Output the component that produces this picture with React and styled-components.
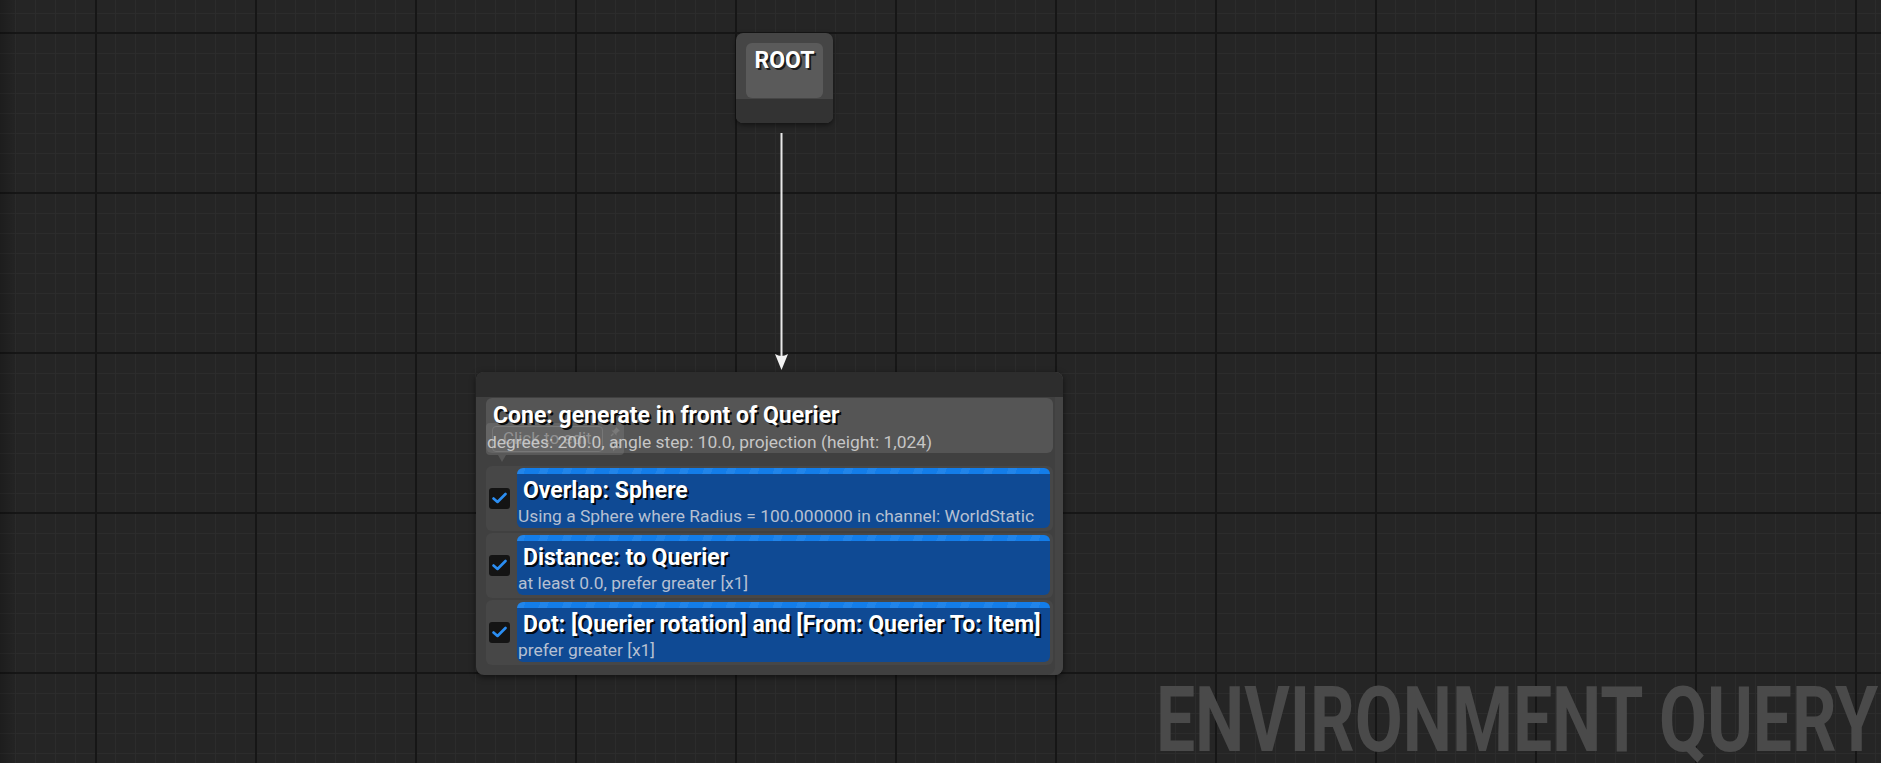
import React from "react";
import styled, { createGlobalStyle } from "styled-components";

const GlobalStyle = createGlobalStyle`
    html, body {
        margin: 0;
        padding: 0;
        background: #252525;
    }
    body {
        font-family: Roboto, "Noto Sans", sans-serif;
    }
`

const Canvas = styled.div`
    position: relative;
    width: 1881px;
    height: 763px;
    overflow: hidden;
    background-color: #252525;
    background-image:
        linear-gradient(90deg, rgba(0,0,0,0.22), rgba(0,0,0,0) 18px),
        linear-gradient(90deg, #161616 0 2px, transparent 2px),
        linear-gradient(180deg, #161616 0 2px, transparent 2px),
        linear-gradient(90deg, #2c2c2c 0 1px, transparent 1px),
        linear-gradient(180deg, #2c2c2c 0 1px, transparent 1px);
    background-size: 100% 100%, 160px 160px, 160px 160px, 20px 20px, 20px 20px;
    background-position: 0 0, 95px 0, 0 32px, 15px 0, 0 13px;
`

const NodeSpot = styled.div`
    position: absolute;
    left: ${props => props.$x}px;
    top: ${props => props.$y}px;
`

const RootNode = styled.div`
    width: 97px;
    height: 90px;
    border-radius: 7px;
    background: #454545;
    box-shadow: 0 2px 5px rgba(0,0,0,0.5);
    display: flex;
    flex-direction: column;
    overflow: hidden;
`

const RootLabel = styled.div`
    margin: 10px 10px 0 10px;
    height: 55px;
    border-radius: 6px;
    background: #5a5a5a;
    display: flex;
    justify-content: center;
    padding-top: 4px;
    box-sizing: border-box;
    color: #fff;
    font-size: 23px;
    font-weight: 700;
    line-height: 27px;
    text-shadow: 2px 2px 0 #1a1a1a;
`

const RootFoot = styled.div`
    margin-top: auto;
    height: 24px;
    background: #333;
`

const Wire = styled.svg`
    position: absolute;
    left: 770px;
    top: 130px;
    overflow: visible;
`

const QueryNode = styled.div`
    width: 587px;
    border-radius: 8px;
    background: #404040;
    box-shadow: 0 2px 6px rgba(0,0,0,0.55), inset -8px 0 0 #454545;
    overflow: hidden;
`

const NodeHeader = styled.div`
    height: 25px;
    background: #2d2d2d;
`

const NodeBody = styled.div`
    padding: 1px 10px 10px 10px;
`

const TitleBox = styled.div`
    position: relative;
    height: 55px;
    border-radius: 6px;
    background: #555;
    box-sizing: border-box;
    padding-top: 5px;
`

const Title = styled.div`
    position: relative;
    z-index: 1;
    padding-left: ${props => props.$indent}px;
    color: #fff;
    font-size: 23px;
    font-weight: 700;
    line-height: 26px;
    white-space: nowrap;
    text-shadow: 2px 2px 0 rgba(0,0,0,0.9);
`

const Subtitle = styled.div`
    position: relative;
    z-index: 1;
    margin-top: ${props => props.$gap}px;
    padding-left: 1px;
    color: ${props => props.$tone};
    font-size: 17.4px;
    line-height: 20px;
    white-space: nowrap;
`

const EditTip = styled.div`
    position: absolute;
    left: 0;
    top: 25px;
    width: 138px;
    height: 32px;
    border-radius: 4px;
    background: rgba(125,125,125,0.4);
    display: flex;
    align-items: center;
    padding-left: 6px;
    box-sizing: border-box;
    &::after {
        content: "";
        position: absolute;
        left: 12px;
        bottom: -7px;
        border-left: 4px solid transparent;
        border-right: 4px solid transparent;
        border-top: 7px solid rgba(125,125,125,0.4);
    }
`

const EditField = styled.div`
    width: 111px;
    height: 26px;
    border: 1px solid #777;
    border-radius: 4px;
    box-sizing: border-box;
    color: rgba(255,255,255,0.3);
    font-size: 17px;
    line-height: 22px;
    padding-left: 10px;
    white-space: nowrap;
    overflow: hidden;
`

const TipIcons = styled.div`
    display: flex;
    flex-direction: column;
    gap: 4px;
    margin-left: 7px;
`

const Rows = styled.div`
    margin-top: 13px;
    display: flex;
    flex-direction: column;
    gap: 2px;
`

const Row = styled.div`
    height: 65px;
    border-radius: 6px;
    background: #474747;
    display: flex;
    align-items: center;
    padding: 2px 3px 3px 0;
    box-sizing: border-box;
`

const CheckSlot = styled.div`
    width: 31px;
    padding-left: 3px;
    box-sizing: border-box;
    display: flex;
`

const CheckBox = styled.div`
    width: 21px;
    height: 21px;
    border-radius: 3px;
    background: #141414;
    display: flex;
    align-items: center;
    justify-content: center;
`

const TestBlock = styled.div`
    flex: 1;
    height: 60px;
    border-radius: 6px;
    background:
        repeating-linear-gradient(110deg, rgba(255,255,255,0.06) 0 8px, rgba(255,255,255,0) 8px 22px) 0 0 / 100% 6px no-repeat,
        linear-gradient(180deg, #137de9 0 6px, #0f4a94 6px);
    box-sizing: border-box;
    padding-top: 10px;
    display: flex;
    flex-direction: column;
`

const Watermark = styled.div`
    position: absolute;
    right: 3px;
    bottom: 2px;
    color: #4a4a4a;
    font-size: 90px;
    font-weight: 700;
    line-height: 80px;
    white-space: nowrap;
    transform: scaleX(0.774);
    transform-origin: right bottom;
`

const tests = [
    { title: "Overlap: Sphere", detail: "Using a Sphere where Radius = 100.000000 in channel: WorldStatic" },
    { title: "Distance: to Querier", detail: "at least 0.0, prefer greater [x1]" },
    { title: "Dot: [Querier rotation] and [From: Querier To: Item]", detail: "prefer greater [x1]" }
];

const Check = () => (
    <svg width="15" height="12" viewBox="0 0 15 12">
        <path d="M1.5 6.5 L5.5 10 L13.5 2" fill="none" stroke="#2b8ef3" strokeWidth="2.6" strokeLinecap="round" strokeLinejoin="round" />
    </svg>
);

const PinIcon = () => (
    <svg width="11" height="11" viewBox="0 0 11 11">
        <path d="M6 1 L10 5 L8.5 5.5 L6.5 7.5 L6.5 9.5 L1.5 4.5 L3.5 4.5 L5.5 2.5 Z" fill="#7a7a7a" />
        <path d="M3.5 7.5 L1 10" stroke="#7a7a7a" strokeWidth="1.4" />
    </svg>
);

const CommentIcon = () => (
    <svg width="12" height="11" viewBox="0 0 12 11">
        <rect x="0.5" y="0.5" width="11" height="7" rx="1.5" fill="#7a7a7a" />
        <path d="M3 7.5 L3 10.5 L6 7.5 Z" fill="#7a7a7a" />
        <circle cx="3.3" cy="4" r="0.9" fill="#3a3a3a" />
        <circle cx="6" cy="4" r="0.9" fill="#3a3a3a" />
        <circle cx="8.7" cy="4" r="0.9" fill="#3a3a3a" />
    </svg>
);

const App = () => (
    <Canvas>
        <GlobalStyle />
        <NodeSpot $x={736} $y={33}>
            <RootNode>
                <RootLabel>ROOT</RootLabel>
                <RootFoot />
            </RootNode>
        </NodeSpot>
        <Wire width="24" height="245" viewBox="0 0 24 245">
            <line x1="11.5" y1="3" x2="11.5" y2="232" stroke="#e8e8e8" strokeWidth="2" />
            <path d="M5 224 Q11.5 228 18 224 L11.5 240 Z" fill="#f2f2f2" />
        </Wire>
        <NodeSpot $x={476} $y={372}>
            <QueryNode>
                <NodeHeader />
                <NodeBody>
                    <TitleBox>
                        <Title $indent={7}>Cone: generate in front of Querier</Title>
                        <Subtitle $gap={3} $tone="#c6c6c6">degrees: 200.0, angle step: 10.0, projection (height: 1,024)</Subtitle>
                        <EditTip>
                            <EditField>Click to edit</EditField>
                            <TipIcons>
                                <PinIcon />
                                <CommentIcon />
                            </TipIcons>
                        </EditTip>
                    </TitleBox>
                    <Rows>
                        {tests.map(t => (
                            <Row key={t.title}>
                                <CheckSlot>
                                    <CheckBox><Check /></CheckBox>
                                </CheckSlot>
                                <TestBlock>
                                    <Title $indent={6}>{t.title}</Title>
                                    <Subtitle $gap={2} $tone="#b6c0d2">{t.detail}</Subtitle>
                                </TestBlock>
                            </Row>
                        ))}
                    </Rows>
                </NodeBody>
            </QueryNode>
        </NodeSpot>
        <Watermark>ENVIRONMENT QUERY</Watermark>
    </Canvas>
);

export default App;
